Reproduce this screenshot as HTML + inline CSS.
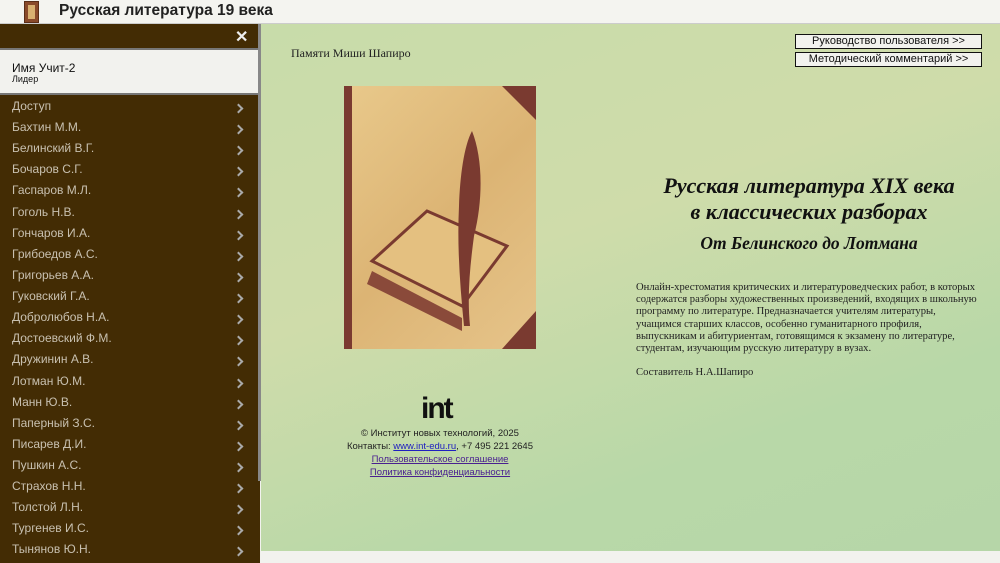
<!DOCTYPE html><html><head><meta charset="utf-8"><style>
*{margin:0;padding:0;box-sizing:border-box}
body{width:1000px;height:563px;overflow:hidden;background:#f2f2ee;font-family:"Liberation Sans",sans-serif;position:relative}
#hdr{position:absolute;left:0;top:0;width:1000px;height:24px;background:#f4f4f0;border-bottom:1px solid #ccc}
#hdr .t{position:absolute;left:59px;top:2px;font-size:15.5px;font-weight:bold;color:#222}
#logo{position:absolute;left:24px;top:1px;width:15px;height:22px;background:#8a4a2a;border:1px solid #5a2e18}
#logo:after{content:"";position:absolute;left:3px;top:3px;width:7px;height:14px;background:#d8b070}
#side{position:absolute;left:0;top:24px;width:260px;height:539px;background:#432c04}
#side .gb{position:absolute;left:258px;top:0;width:3px;height:457px;background:#888}
#x{position:absolute;left:235px;top:3px;color:#eee;font-size:16px;font-weight:bold}
#user{position:absolute;left:0;top:24px;width:258px;height:47px;background:#f2f2ee;border-top:2px solid #777;border-bottom:2px solid #777}
#user b{position:absolute;left:12px;top:11px;font-weight:normal;font-size:12px;color:#111}
#user i{position:absolute;left:12px;top:24px;font-style:normal;font-size:9px;color:#111}
.m{position:absolute;left:12px;font-size:12px;color:#c8c0b0;width:240px}
.m:after{content:"";position:absolute;right:10px;top:6px;width:5px;height:5px;border-right:2px solid #aaa;border-top:2px solid #aaa;transform:rotate(45deg)}
#main{position:absolute;left:261px;top:24px;width:739px;height:527px;background:linear-gradient(160deg,#c8dcaa 0%,#cfdcaa 40%,#b8d8a8 75%,#b6d6a8 100%)}
.ser{font-family:"Liberation Serif",serif}
.btn{position:absolute;left:534px;width:187px;height:15px;border:1px solid #111;background:#f2f2ee;font-size:11px;text-align:center;line-height:13px;color:#111}
#book{position:absolute;left:83px;top:62px;width:192px;height:263px;background:linear-gradient(135deg,#e8c88a,#dcb474 50%,#e6c48a);border-left:8px solid #7a3a30}
.ft{position:absolute;left:4px;width:350px;text-align:center;font-size:9.5px;color:#222}
a{color:#2020c0;text-decoration:underline}
.ft a.p{color:#4a2090}
</style></head><body>
<div id="hdr"><div id="logo"></div><div class="t">Русская литература 19 века</div></div>
<div id="side"><div class="gb"></div><div id="x">✕</div>
<div id="user"><b>Имя Учит-2</b><i>Лидер</i></div>
<div class="m" style="top:75px">Доступ</div>
<div class="m" style="top:96px">Бахтин М.М.</div>
<div class="m" style="top:117px">Белинский В.Г.</div>
<div class="m" style="top:138px">Бочаров С.Г.</div>
<div class="m" style="top:159px">Гаспаров М.Л.</div>
<div class="m" style="top:181px">Гоголь Н.В.</div>
<div class="m" style="top:202px">Гончаров И.А.</div>
<div class="m" style="top:223px">Грибоедов А.С.</div>
<div class="m" style="top:244px">Григорьев А.А.</div>
<div class="m" style="top:265px">Гуковский Г.А.</div>
<div class="m" style="top:286px">Добролюбов Н.А.</div>
<div class="m" style="top:307px">Достоевский Ф.М.</div>
<div class="m" style="top:328px">Дружинин А.В.</div>
<div class="m" style="top:350px">Лотман Ю.М.</div>
<div class="m" style="top:371px">Манн Ю.В.</div>
<div class="m" style="top:392px">Паперный З.С.</div>
<div class="m" style="top:413px">Писарев Д.И.</div>
<div class="m" style="top:434px">Пушкин А.С.</div>
<div class="m" style="top:455px">Страхов Н.Н.</div>
<div class="m" style="top:476px">Толстой Л.Н.</div>
<div class="m" style="top:497px">Тургенев И.С.</div>
<div class="m" style="top:518px">Тынянов Ю.Н.</div>
</div>
<div id="main">
<div class="ser" style="position:absolute;left:30px;top:22px;font-size:12px;color:#222">Памяти Миши Шапиро</div>
<div class="btn" style="top:10px">Руководство пользователя &gt;&gt;</div>
<div class="btn" style="top:28px">Методический комментарий &gt;&gt;</div>
<div id="book"><svg width="184" height="263" viewBox="0 0 184 263">
<path d="M150 0 L184 0 L184 34 Z" fill="#7a3a30"/><path d="M184 225 L184 263 L150 263 Z" fill="#7a3a30"/>
<path d="M20 185 L110 232 L110 245 L15 198 Z" fill="#8a4a3a"/><path d="M20 175 L110 220 L155 160 L75 125 Z" fill="#e4c080" stroke="#7a3a30" stroke-width="3"/>
<path d="M120 45 C130 70 132 110 122 150 C118 180 115 210 118 240 L112 240 C108 200 105 160 107 120 C108 90 112 60 120 45 Z" fill="#7a3a30"/>
</svg></div>
<div style="position:absolute;left:160px;top:368px;font-size:30px;font-weight:bold;letter-spacing:-2px;color:#111">int</div>
<div class="ft" style="top:404px">© Институт новых технологий, 2025</div>
<div class="ft" style="top:417px">Контакты: <a>www.int-edu.ru</a>, +7 495 221 2645</div>
<div class="ft" style="top:430px"><a class="p">Пользовательское соглашение</a></div>
<div class="ft" style="top:443px"><a class="p">Политика конфиденциальности</a></div>
<div class="ser" style="position:absolute;left:370px;top:149px;width:356px;text-align:center;font-size:22px;font-weight:bold;font-style:italic;line-height:26px;color:#111">Русская литература XIX века<br>в классических разборах</div>
<div class="ser" style="position:absolute;left:370px;top:209px;width:356px;text-align:center;font-size:17.5px;font-weight:bold;font-style:italic;color:#111">От Белинского до Лотмана</div>
<div class="ser" style="position:absolute;left:375px;top:258px;width:345px;font-size:10.6px;line-height:12.2px;color:#222;white-space:nowrap">Онлайн-хрестоматия критических и литературоведческих работ, в которых<br>содержатся разборы художественных произведений, входящих в школьную<br>программу по литературе. Предназначается учителям литературы,<br>учащимся старших классов, особенно гуманитарного профиля,<br>выпускникам и абитуриентам, готовящимся к экзамену по литературе,<br>студентам, изучающим русскую литературу в вузах.<br><br>Составитель Н.А.Шапиро</div>
</div>
</body></html>
